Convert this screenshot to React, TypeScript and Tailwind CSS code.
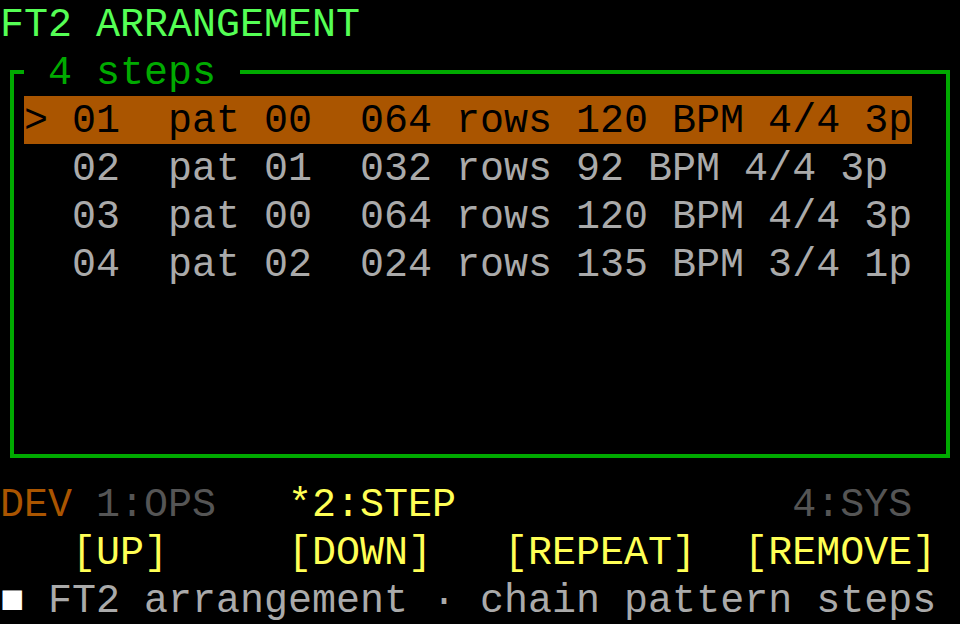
import React from "react";

type Step = { n: string; pat: string; rows: string; bpm: string; sig: string; p: string };

const steps: Step[] = [
  { n: "01", pat: "00", rows: "064", bpm: "120", sig: "4/4", p: "3p" },
  { n: "02", pat: "01", rows: "032", bpm: "92", sig: "4/4", p: "3p" },
  { n: "03", pat: "00", rows: "064", bpm: "120", sig: "4/4", p: "3p" },
  { n: "04", pat: "02", rows: "024", bpm: "135", sig: "3/4", p: "1p" },
];

const selected = 0;

// one terminal cell row: 48px tall, baseline nudged down to match the bitmap font
const row = "h-[48px] pt-[4px] leading-[44px]";

export default function App() {
  return (
    <div
      className="w-[960px] h-[624px] overflow-hidden bg-black text-[40px] whitespace-pre"
      style={{ fontFamily: '"Liberation Mono", "DejaVu Sans Mono", monospace' }}
    >
      <div className={`${row} text-[#55ff55]`}>FT2 ARRANGEMENT</div>

      <fieldset className="mx-[10px] h-[410px] border-4 border-[#00aa00]">
        <legend className={`${row} ml-[10px] text-[#00aa00]`}>{" 4 steps "}</legend>
        <div className="pl-[10px] flex flex-col">
          {steps.map((s, i) => {
            const line = `${i === selected ? ">" : " "} ${s.n}  pat ${s.pat}  ${s.rows} rows ${s.bpm} BPM ${s.sig} ${s.p}`;
            return (
              <div
                key={s.n}
                className={`${row} w-fit ${i === selected ? "bg-[#aa5500] text-black" : "text-[#aaaaaa]"}`}
              >
                {line}
              </div>
            );
          })}
        </div>
      </fieldset>

      <div className={`${row} mt-[22px]`}>
        <span className="text-[#aa5500]">DEV</span>
        <span className="text-[#555555]">{" 1:OPS   "}</span>
        <span className="text-[#ffff55]">{"*2:STEP"}</span>
        <span>{"              "}</span>
        <span className="text-[#555555]">4:SYS</span>
      </div>

      <div className={`${row} text-[#ffff55]`}>{"   [UP]     [DOWN]   [REPEAT]  [REMOVE]"}</div>

      <div className={row}>
        <span className="text-white">■</span>
        <span className="text-[#aaaaaa]">{" FT2 arrangement · chain pattern steps"}</span>
      </div>
    </div>
  );
}
